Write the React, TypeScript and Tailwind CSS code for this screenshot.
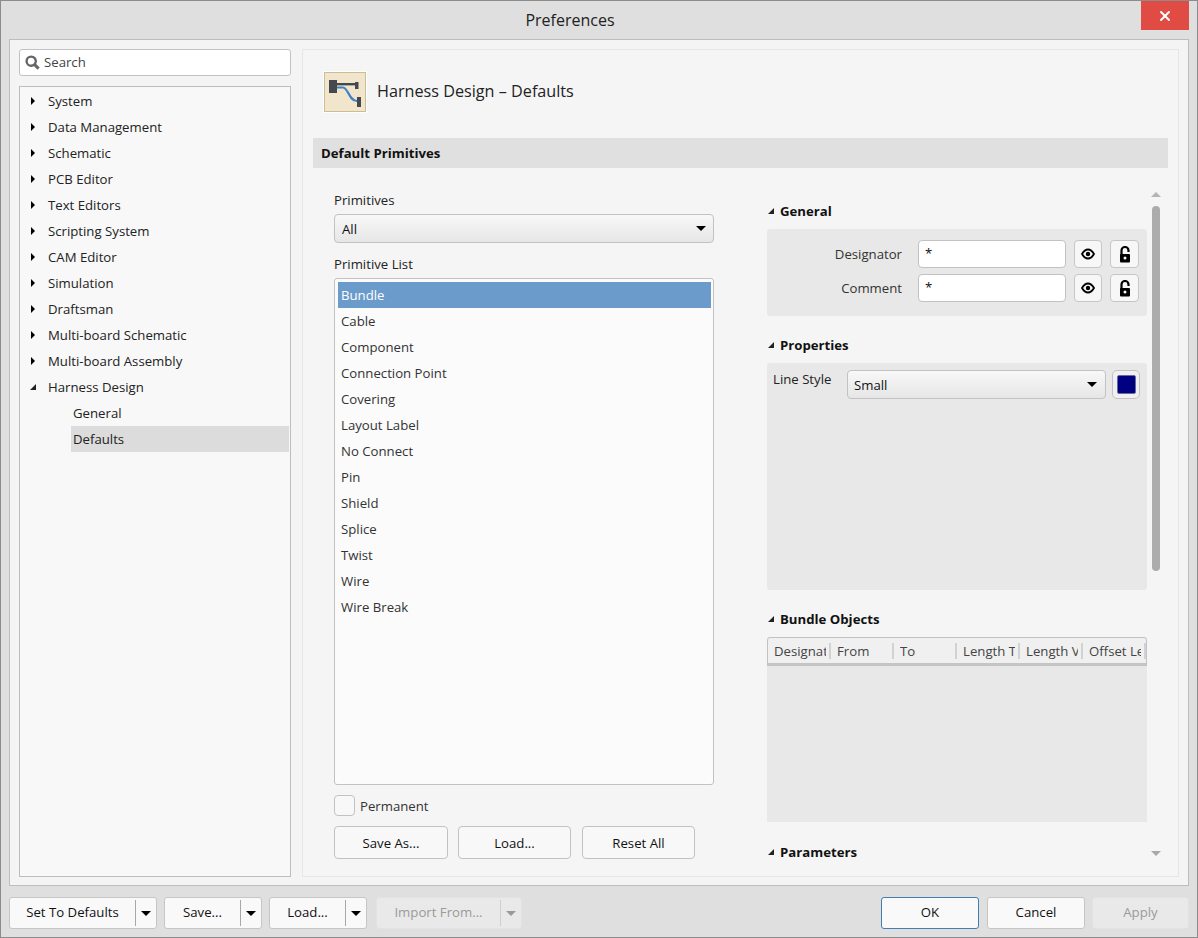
import { X } from "lucide-react";

const treeItems = [
  "System",
  "Data Management",
  "Schematic",
  "PCB Editor",
  "Text Editors",
  "Scripting System",
  "CAM Editor",
  "Simulation",
  "Draftsman",
  "Multi-board Schematic",
  "Multi-board Assembly",
];

const primitives = [
  "Cable",
  "Component",
  "Connection Point",
  "Covering",
  "Layout Label",
  "No Connect",
  "Pin",
  "Shield",
  "Splice",
  "Twist",
  "Wire",
  "Wire Break",
];

const columns = ["Designator", "From", "To", "Length Type", "Length Value", "Offset Length"];

function Caret({ className = "border-t-black" }: { className?: string }) {
  return <span className={`h-0 w-0 border-x-[5px] border-t-[5px] border-x-transparent ${className}`} />;
}

function SplitButton({ label, width, disabled }: { label: string; width: string; disabled?: boolean }) {
  return (
    <div
      className={`flex h-[32px] items-center rounded-[3px] border ${width} ${
        disabled ? "border-[#e2e2e2] bg-[#e9e9e9] text-[#9a9a9a]" : "border-[#c6c6c6] bg-[#f9f9f9] text-[#111]"
      }`}
    >
      <span className="flex-1 text-center">{label}</span>
      <span className={`h-[26px] w-px ${disabled ? "bg-[#cfcfcf]" : "bg-[#a8a8a8]"}`} />
      <span className="flex w-[20px] justify-center">
        <Caret className={disabled ? "border-t-[#9a9a9a]" : "border-t-black"} />
      </span>
    </div>
  );
}

function SectionTitle({ label, className }: { label: string; className: string }) {
  return (
    <div className={`flex h-[20px] items-center gap-[6px] pl-[1px] font-bold text-[#111] ${className}`}>
      <span className="h-0 w-0 border-b-[6px] border-l-[6px] border-b-[#222] border-l-transparent" />
      <span className="pt-[2px]">{label}</span>
    </div>
  );
}

function EyeIcon() {
  return (
    <svg width="14" height="12" viewBox="0 0 14 12" fill="none">
      <path d="M1 6C3 2.6 5 1.5 7 1.5S11 2.6 13 6C11 9.4 9 10.5 7 10.5S3 9.4 1 6Z" stroke="#000" strokeWidth="1.8" />
      <circle cx="7" cy="6" r="2.2" fill="#000" />
    </svg>
  );
}

function LockIcon() {
  return (
    <svg width="12" height="17" viewBox="0 0 12 17" fill="none">
      <path d="M2.5 9V4.5a3.5 3.5 0 0 1 7 0V6" stroke="#000" strokeWidth="2.2" />
      <rect x="1" y="8" width="10" height="8.5" rx="1" fill="#000" />
      <circle cx="6" cy="12" r="1.5" fill="#f7f7f7" />
    </svg>
  );
}

function FieldRow({ label }: { label: string }) {
  return (
    <div className="flex h-[28px] items-center">
      <span className="w-[135px] pt-[2px] pr-[16px] text-right text-[#333]">{label}</span>
      <div className="h-[28px] w-[148px] rounded-[4px] border border-[#c2c2c2] bg-white pl-[6px] leading-[24px] text-[#111]">*</div>
      <button className="ml-[8px] flex h-[28px] w-[28px] items-center justify-center rounded-[4px] border border-[#c6c6c6] bg-[#f7f7f7]">
        <EyeIcon />
      </button>
      <button className="ml-[8px] flex h-[28px] w-[29px] items-center justify-center rounded-[4px] border border-[#c6c6c6] bg-[#f7f7f7]">
        <LockIcon />
      </button>
    </div>
  );
}

export default function App() {
  return (
    <div
      className="flex h-[938px] w-[1198px] flex-col border border-[#8c8c8c] bg-[#dfdfdf] text-[13.2px] text-[#222]"
      style={{ fontFamily: '"Open Sans", "Noto Sans", sans-serif' }}
    >
      {/* title bar */}
      <div className="flex h-[38px] shrink-0 items-start">
        <div className="flex h-[38px] flex-1 items-center justify-center pr-[2px] text-[16px] text-[#222]">Preferences</div>
        <div className="mr-[8px] flex h-[29px] w-[48px] items-center justify-center bg-[#e04b43]">
          <X size={16} strokeWidth={3} className="text-white" />
        </div>
      </div>

      {/* main panel */}
      <div className="mx-[8px] flex h-[847px] gap-[11px] border border-[#bdbdbd] bg-[#f4f4f4] px-[9px] pt-[9px] pb-[8px]">
        {/* left side */}
        <div className="flex w-[272px] shrink-0 flex-col gap-[10px]">
          <div className="flex h-[27px] items-center gap-[4px] rounded-[3px] border border-[#c2c2c2] bg-white pl-[5px]">
            <svg width="15" height="15" viewBox="0 0 15 15" fill="none">
              <circle cx="6.2" cy="6.2" r="4.6" stroke="#666" strokeWidth="2.4" />
              <path d="M9.6 9.6L13.6 13.6" stroke="#666" strokeWidth="3" />
            </svg>
            <span className="text-[#444]">Search</span>
          </div>
          <div className="flex flex-1 flex-col border border-[#bdbdbd] bg-[#f8f8f8] pt-[1px] pr-[1px]">
            {treeItems.map((item) => (
              <div key={item} className="flex h-[26px] items-center">
                <span className="ml-[11px] mr-[13px] h-0 w-0 border-y-[4px] border-l-[4px] border-y-transparent border-l-black" />
                <span className="pt-[2px]">{item}</span>
              </div>
            ))}
            <div className="flex h-[26px] items-center">
              <span className="ml-[10px] mr-[12px] h-0 w-0 border-b-[6px] border-l-[6px] border-b-[#222] border-l-transparent" />
              <span className="pt-[2px]">Harness Design</span>
            </div>
            <div className="ml-[51px] flex h-[26px] items-center pt-[2px] pl-[2px]">General</div>
            <div className="ml-[51px] flex h-[26px] items-center bg-[#dcdcdc] pt-[2px] pl-[2px]">Defaults</div>
          </div>
        </div>

        {/* right side */}
        <div className="flex flex-1 flex-col border border-[#e6e6e6] bg-[#f5f5f5] px-[10px]">
          <div className="flex h-[88px] shrink-0 items-center pb-[4px] pl-[11px]">
            <div className="flex h-[40px] w-[42px] items-center justify-center border border-[#cdbd92] bg-[#f1e6cc] shadow-[0_0_0_1px_#ffffff]">
              <svg width="40" height="38" viewBox="1 1 40 38" fill="none">
                <rect x="5" y="8" width="8" height="13" fill="#45494e" />
                <rect x="13" y="11" width="19" height="2.4" fill="#45494e" />
                <rect x="31" y="10" width="3.5" height="7" fill="#45494e" />
                <path d="M13 15.5H19C24 15.5 25 29 33 29" stroke="#3f7fc9" strokeWidth="2.2" />
                <rect x="33" y="25" width="4" height="10" fill="#45494e" />
              </svg>
            </div>
            <span className="ml-[11px] mb-[2px] text-[16.2px] text-[#222]">Harness Design – Defaults</span>
          </div>
          <div className="flex h-[30px] shrink-0 items-center bg-[#e0e0e0] pt-[2px] pl-[8px] font-bold text-[#111]">Default Primitives</div>

          <div className="flex flex-1 pl-[21px]">
            {/* primitive list column */}
            <div className="flex w-[380px] shrink-0 flex-col">
              <div className="mt-[22px] h-[20px] leading-[20px]">Primitives</div>
              <div className="mt-[4px] flex h-[29px] items-center justify-between rounded-[4px] border border-[#c2c2c2] bg-gradient-to-b from-[#f8f8f8] to-[#e6e6e6] pl-[7px] pr-[7px] text-[#111]">
                <span className="pt-[2px]">All</span>
                <Caret />
              </div>
              <div className="mt-[11px] h-[20px] leading-[20px]">Primitive List</div>
              <div className="mt-[4px] flex h-[507px] flex-col rounded-[3px] border border-[#c2c2c2] bg-[#fbfbfb] py-[3px] pl-[3px] pr-[2px]">
                <div className="flex h-[26px] items-center bg-[#6a9bcb] pt-[2px] pl-[3px] text-white">Bundle</div>
                {primitives.map((p) => (
                  <div key={p} className="flex h-[26px] items-center pt-[2px] pl-[3px] text-[#333]">
                    {p}
                  </div>
                ))}
              </div>
              <div className="mt-[10px] flex h-[21px] items-center gap-[5px]">
                <span className="h-[21px] w-[21px] rounded-[4px] border border-[#c2c2c2] bg-[#f8f8f8]" />
                <span className="pt-[2px] text-[#333]">Permanent</span>
              </div>
              <div className="mt-[10px] flex text-[#111]">
                <button className="h-[33px] w-[114px] rounded-[4px] border border-[#c2c2c2] bg-[#f8f8f8] pt-[2px]">Save As...</button>
                <button className="ml-[10px] h-[33px] w-[113px] rounded-[4px] border border-[#c2c2c2] bg-[#f8f8f8] pt-[2px]">Load...</button>
                <button className="ml-[11px] h-[33px] w-[113px] rounded-[4px] border border-[#c2c2c2] bg-[#f8f8f8] pt-[2px]">Reset All</button>
              </div>
            </div>

            {/* properties column */}
            <div className="ml-[53px] flex w-[380px] shrink-0 flex-col">
              <SectionTitle label="General" className="mt-[33px]" />
              <div className="mt-[8px] flex h-[87px] flex-col gap-[6px] rounded-[3px] bg-[#e8e8e8] pt-[11px] pl-[16px]">
                <FieldRow label="Designator" />
                <FieldRow label="Comment" />
              </div>
              <SectionTitle label="Properties" className="mt-[19px]" />
              <div className="mt-[8px] flex h-[227px] items-start rounded-[3px] bg-[#e8e8e8] pt-[7px] pl-[6px]">
                <span className="w-[74px] leading-[18px] text-[#222]">Line Style</span>
                <div className="flex h-[29px] w-[259px] items-center justify-between rounded-[4px] border border-[#c2c2c2] bg-gradient-to-b from-[#f8f8f8] to-[#e6e6e6] pl-[6px] pr-[8px] text-[#111]">
                  <span className="pt-[2px]">Small</span>
                  <Caret />
                </div>
                <div className="ml-[6px] flex h-[29px] w-[28px] items-center justify-center rounded-[5px] border border-[#c2c2c2] bg-[#f0f0f0]">
                  <span className="h-[19px] w-[19px] rounded-[2px] border border-[#6a6a9a] bg-[#000080]" />
                </div>
              </div>
              <SectionTitle label="Bundle Objects" className="mt-[19px]" />
              <div className="mt-[8px] flex h-[185px] flex-col rounded-t-[3px] border-t border-[#c2c2c2] bg-[#e8e8e8]">
                <div className="flex h-[28px] items-center overflow-hidden rounded-t-[3px] border-x border-b-[3px] border-x-[#c2c2c2] border-b-[#c4c4c4] bg-[#f0f0f0] text-[#444]">
                  {columns.map((c) => (
                    <div key={c} className="flex h-[16px] w-[63px] shrink-0 items-center border-r-2 border-[#d2d2d2] pl-[6px]">
                      <span className="w-[52px] overflow-hidden whitespace-nowrap pt-[3px]">{c}</span>
                    </div>
                  ))}
                </div>
              </div>
              <SectionTitle label="Parameters" className="mt-[20px]" />
            </div>

            {/* scrollbar */}
            <div className="ml-[4px] flex w-[9px] shrink-0 flex-col items-center">
              <span className="mt-[24px] h-0 w-0 border-x-[5px] border-b-[5px] border-x-transparent border-b-[#b4b4b4]" />
              <span className="mt-[9px] h-[365px] w-[8px] rounded-[4px] bg-[#acacac]" />
              <span className="mt-[280px] h-0 w-0 border-x-[5px] border-t-[5px] border-x-transparent border-t-[#a8a8a8]" />
            </div>
          </div>
        </div>
      </div>

      {/* bottom bar */}
      <div className="mx-[8px] mt-[11px] flex">
        <SplitButton label="Set To Defaults" width="w-[148px]" />
        <div className="ml-[7px]">
          <SplitButton label="Save..." width="w-[98px]" />
        </div>
        <div className="ml-[7px]">
          <SplitButton label="Load..." width="w-[98px]" />
        </div>
        <div className="ml-[9px]">
          <SplitButton label="Import From..." width="w-[146px]" disabled />
        </div>
        <div className="flex-1" />
        <button className="h-[32px] w-[98px] rounded-[3px] border border-[#3f7fb5] bg-[#f9f9f9] text-[#111]">OK</button>
        <button className="ml-[8px] h-[32px] w-[98px] rounded-[3px] border border-[#c6c6c6] bg-[#f9f9f9] text-[#111]">Cancel</button>
        <button className="ml-[7px] h-[32px] w-[97px] rounded-[3px] border border-[#e2e2e2] bg-[#e9e9e9] text-[#9a9a9a]">Apply</button>
      </div>
    </div>
  );
}
